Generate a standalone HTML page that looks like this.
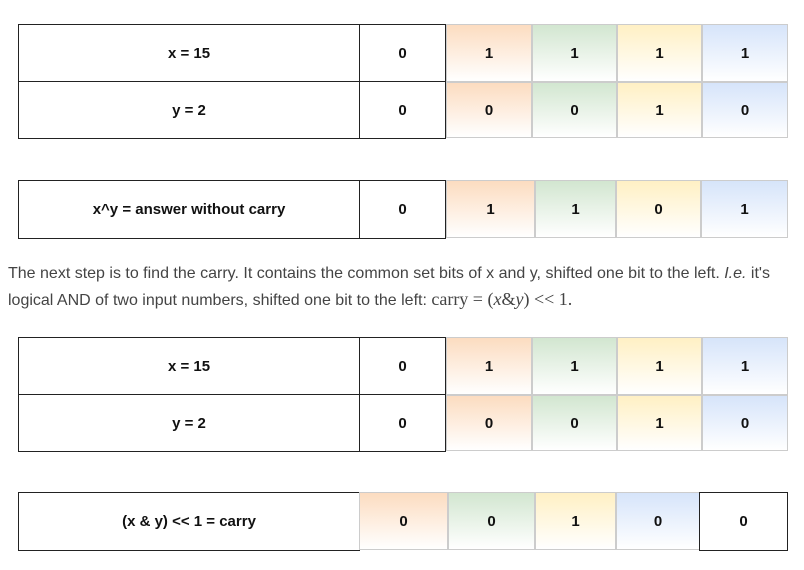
<!DOCTYPE html>
<html><head><meta charset="utf-8"><style>
body{margin:0;width:804px;height:570px;background:#fff;position:relative;overflow:hidden;font-family:"Liberation Sans",sans-serif}
.c{position:absolute;box-sizing:border-box;display:flex;align-items:center;justify-content:center;font-weight:bold;font-size:15px;color:#111}
.w{border:1.5px solid #222;background:#fff}
.o,.g,.y,.b{border:1px solid #ccc}
.o{background:linear-gradient(#fcdcc0,#fff)}
.g{background:linear-gradient(#d2e6d0,#fff)}
.y{background:linear-gradient(#fff0c4,#fff)}
.b{background:linear-gradient(#d6e4fa,#fff)}
.t{position:absolute;left:8px;font-size:16px;color:#444;white-space:nowrap}
</style></head><body>
<div class="c w" style="left:18px;top:24px;width:342px;height:59px">x = 15</div>
<div class="c w" style="left:359px;top:24px;width:87px;height:59px">0</div>
<div class="c o" style="left:446px;top:24px;width:86px;height:58px">1</div>
<div class="c g" style="left:532px;top:24px;width:85px;height:58px">1</div>
<div class="c y" style="left:617px;top:24px;width:85px;height:58px">1</div>
<div class="c b" style="left:702px;top:24px;width:86px;height:58px">1</div>
<div class="c w" style="left:18px;top:81px;width:342px;height:58px">y = 2</div>
<div class="c w" style="left:359px;top:81px;width:87px;height:58px">0</div>
<div class="c o" style="left:446px;top:82px;width:86px;height:56px">0</div>
<div class="c g" style="left:532px;top:82px;width:85px;height:56px">0</div>
<div class="c y" style="left:617px;top:82px;width:85px;height:56px">1</div>
<div class="c b" style="left:702px;top:82px;width:86px;height:56px">0</div>
<div class="c w" style="left:18px;top:180px;width:342px;height:59px">x^y = answer without carry</div>
<div class="c w" style="left:359px;top:180px;width:87px;height:59px">0</div>
<div class="c o" style="left:446px;top:180px;width:89px;height:58px">1</div>
<div class="c g" style="left:535px;top:180px;width:81px;height:58px">1</div>
<div class="c y" style="left:616px;top:180px;width:85px;height:58px">0</div>
<div class="c b" style="left:701px;top:180px;width:87px;height:58px">1</div>
<div class="t" style="top:265px">The next step is to find the carry. It contains the common set bits of x and y, shifted one bit to the left. <i>I.e.</i> it's</div>
<div class="t" style="top:289px">logical AND of two input numbers, shifted one bit to the left: <span style="font-family:'Liberation Serif',serif;font-size:18px">carry = (<i>x</i>&amp;<i>y</i>) &lt;&lt; 1.</span></div>
<div class="c w" style="left:18px;top:337px;width:342px;height:59px">x = 15</div>
<div class="c w" style="left:359px;top:337px;width:87px;height:59px">0</div>
<div class="c o" style="left:446px;top:337px;width:86px;height:58px">1</div>
<div class="c g" style="left:532px;top:337px;width:85px;height:58px">1</div>
<div class="c y" style="left:617px;top:337px;width:85px;height:58px">1</div>
<div class="c b" style="left:702px;top:337px;width:86px;height:58px">1</div>
<div class="c w" style="left:18px;top:394px;width:342px;height:58px">y = 2</div>
<div class="c w" style="left:359px;top:394px;width:87px;height:58px">0</div>
<div class="c o" style="left:446px;top:395px;width:86px;height:56px">0</div>
<div class="c g" style="left:532px;top:395px;width:85px;height:56px">0</div>
<div class="c y" style="left:617px;top:395px;width:85px;height:56px">1</div>
<div class="c b" style="left:702px;top:395px;width:86px;height:56px">0</div>
<div class="c w" style="left:18px;top:492px;width:342px;height:59px">(x &amp; y) &lt;&lt; 1 = carry</div>
<div class="c o" style="left:359px;top:492px;width:89px;height:58px">0</div>
<div class="c g" style="left:448px;top:492px;width:87px;height:58px">0</div>
<div class="c y" style="left:535px;top:492px;width:81px;height:58px">1</div>
<div class="c b" style="left:616px;top:492px;width:84px;height:58px">0</div>
<div class="c w" style="left:699px;top:492px;width:89px;height:59px">0</div>
</body></html>
